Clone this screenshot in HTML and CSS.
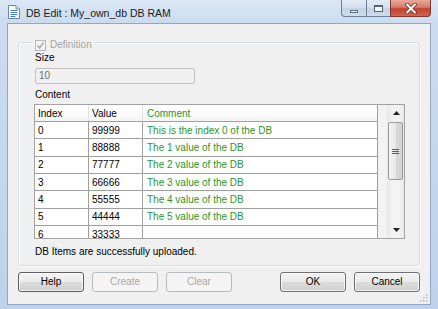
FILE: index.html
```html
<!DOCTYPE html>
<html>
<head>
<meta charset="utf-8">
<link rel="stylesheet" href="styles.css">
</head>
<body>
<div class="window">
  <div class="titlebar">
    <svg class="app-icon" width="12" height="14" viewBox="0 0 12 14">
      <path d="M0.5 0.5 H8 L11.5 4 V13.5 H0.5 Z" fill="#fff" stroke="#6f87a6"/>
      <path d="M8 0.5 V4 H11.5" fill="#dfe7f1" stroke="#6f87a6"/>
      <path d="M2.5 5.5 H9.5 M2.5 7.5 H9.5 M2.5 9.5 H9.5 M2.5 11.5 H7.5" stroke="#4d7fc4" stroke-width="1"/>
    </svg>
    <span class="title">DB Edit : My_own_db DB RAM</span>
    <div class="caption">
      <div class="cb cb-min"><span class="min-glyph"></span></div>
      <div class="cb cb-max"><span class="max-glyph"></span></div>
      <div class="cb cb-close">
        <svg width="14" height="11" viewBox="0 0 14 11">
          <path d="M3 1.5 L11 9.5 M11 1.5 L3 9.5" stroke="#6b2a22" stroke-width="3.6" stroke-linecap="round"/>
          <path d="M3 1.5 L11 9.5 M11 1.5 L3 9.5" stroke="#ffffff" stroke-width="2" stroke-linecap="round"/>
        </svg>
      </div>
    </div>
  </div>
  <div class="client">
    <fieldset class="group">
      <legend class="legend"><span class="chk"><svg width="9" height="9" viewBox="0 0 9 9"><path d="M1.5 4.5 L3.5 7 L7.5 1.5" fill="none" stroke="#a9a9a9" stroke-width="1.4"/></svg></span><span class="disabled-text">Definition</span></legend>
      <div class="label label-size">Size</div>
      <div class="textbox">10</div>
      <div class="label label-content">Content</div>
      <div class="list">
        <div class="grid">
          <div class="row head">
            <div class="c c1">Index</div>
            <div class="c c2">Value</div>
            <div class="c c3 green">Comment</div>
          </div>
          <div class="row"><div class="c c1">0</div><div class="c c2">99999</div><div class="c c3 green">This is the index 0 of the DB</div></div>
          <div class="row"><div class="c c1">1</div><div class="c c2">88888</div><div class="c c3 green">The 1 value of the DB</div></div>
          <div class="row"><div class="c c1">2</div><div class="c c2">77777</div><div class="c c3 green">The 2 value of the DB</div></div>
          <div class="row"><div class="c c1">3</div><div class="c c2">66666</div><div class="c c3 green">The 3 value of the DB</div></div>
          <div class="row"><div class="c c1">4</div><div class="c c2">55555</div><div class="c c3 green">The 4 value of the DB</div></div>
          <div class="row"><div class="c c1">5</div><div class="c c2">44444</div><div class="c c3 green">The 5 value of the DB</div></div>
          <div class="row"><div class="c c1">6</div><div class="c c2">33333</div><div class="c c3 green"></div></div>
        </div>
        <div class="gap"></div>
        <div class="vscroll">
          <div class="sb-btn"><svg width="7" height="4" viewBox="0 0 7 4"><path d="M0 4 L3.5 0 L7 4 Z" fill="#222"/></svg></div>
          <div class="sb-track">
            <div class="thumb"><span class="grip"></span></div>
          </div>
          <div class="sb-btn"><svg width="7" height="4" viewBox="0 0 7 4"><path d="M0 0 L3.5 4 L7 0 Z" fill="#222"/></svg></div>
        </div>
      </div>
      <div class="status">DB Items are successfully uploaded.</div>
    </fieldset>
    <div class="buttons">
      <div class="btn focus">Help</div>
      <div class="btn disabled">Create</div>
      <div class="btn disabled">Clear</div>
      <div class="spacer"></div>
      <div class="btn">OK</div>
      <div class="btn">Cancel</div>
    </div>
    <svg class="grip-corner" width="8" height="8" viewBox="0 0 8 8">
      <rect x="6" y="0" width="1.5" height="1.5" fill="#b8b8b8"/>
      <rect x="3" y="3" width="1.5" height="1.5" fill="#b8b8b8"/>
      <rect x="6" y="3" width="1.5" height="1.5" fill="#b8b8b8"/>
      <rect x="0" y="6" width="1.5" height="1.5" fill="#b8b8b8"/>
      <rect x="3" y="6" width="1.5" height="1.5" fill="#b8b8b8"/>
      <rect x="6" y="6" width="1.5" height="1.5" fill="#b8b8b8"/>
    </svg>
  </div>
</div>
</body>
</html>
```
FILE: styles.css
```css
* { box-sizing: border-box; }
html, body { margin: 0; padding: 0; }
body {
  font-family: "Liberation Sans", Arial, sans-serif;
  font-size: 10px;
  color: #000;
  background: #c4d6ed;
}
.window {
  width: 438px;
  height: 309px;
  display: flex;
  flex-direction: column;
  background: linear-gradient(#dbe7f5 0px, #cbdcf0 22px, #bed2eb 100%);
  overflow: hidden;
}
.titlebar {
  height: 23px;
  display: flex;
  align-items: center;
  padding-left: 8px;
  flex: none;
}
.app-icon { flex: none; margin-right: 6px; margin-top: 1px; }
.title {
  font-size: 10.5px;
  color: #1b1b1b;
  margin-top: 2px;
}
.caption {
  margin-left: auto;
  margin-right: 7px;
  align-self: flex-start;
  display: flex;
}
.cb {
  height: 17px;
  border: 1px solid #6c7f98;
  border-top: none;
  display: flex;
  align-items: center;
  justify-content: center;
}
.cb-min {
  width: 25px;
  border-right: none;
  border-bottom-left-radius: 4px;
  background: linear-gradient(#e3ebf5, #d2deec 50%, #c3d2e6 51%, #cfdcee);
}
.cb-max {
  width: 24px;
  border-right: none;
  background: linear-gradient(#e3ebf5, #d2deec 50%, #c3d2e6 51%, #cfdcee);
}
.cb-close {
  width: 41px;
  border-color: #7e3a2f;
  border-bottom-right-radius: 4px;
  background: linear-gradient(#e9a99c, #d77a6a 45%, #c2412e 55%, #d2644f);
}
.min-glyph {
  width: 8px;
  height: 3px;
  margin-top: 6px;
  background: #f4f7fb;
  border: 1px solid #5b6d85;
}
.max-glyph {
  width: 9px;
  height: 7px;
  border: 1px solid #4e5f76;
  border-top-width: 2px;
  background: #fbfcfe;
}
.client {
  flex: 1;
  margin: 0 7px 4px 7px;
  border: 1px solid #92a6c1;
  background: #f0f0f0;
  padding: 10px 10px 0 10px;
  display: flex;
  flex-direction: column;
  position: relative;
}
.group {
  margin: 0;
  border: 1px solid #d5dfe5;
  border-radius: 3px;
  box-shadow: inset 1px 1px 0 #fff, 1px 1px 0 #fff;
  padding: 0 14px 7px 15px;
  min-width: 0;
}
.legend {
  display: flex;
  align-items: center;
  padding: 5px 2px 0 0;
  margin-left: -1px;
  line-height: 12px;
}
.chk {
  width: 11px;
  height: 11px;
  margin-left: 2px;
  margin-right: 4px;
  border: 1px solid #b9b9b9;
  background: #f4f4f4;
  display: flex;
  align-items: center;
  justify-content: center;
}
.disabled-text { color: #a3a3a3; }
.label {
  line-height: 12px;
  padding-left: 1px;
}
.label-size { margin-top: 1px; }
.textbox {
  margin-top: 4px;
  margin-left: 1px;
  width: 160px;
  height: 16px;
  border: 1px solid #c2c2c2;
  border-radius: 2px;
  background: #f0f0f0;
  color: #6d6d6d;
  line-height: 14px;
  padding-left: 3px;
}
.label-content { margin-top: 5px; }
.list {
  margin-top: 3px;
  width: 371px;
  height: 135px;
  border: 1px solid #a3a3a3;
  background: #fff;
  display: flex;
  overflow: hidden;
}
.grid {
  width: 343px;
  flex: none;
  height: 100%;
  overflow: hidden;
  background: #fff;
}
.row {
  display: flex;
  height: 17.33px;
  border-bottom: 1px solid #a0a0a0;
  flex: none;
}
.row.head {
  height: 17px;
  background: linear-gradient(#ffffff, #fbfbfb 60%, #f3f3f3);
}
.c {
  border-right: 1px solid #a0a0a0;
  padding-left: 3px;
  display: flex;
  align-items: center;
  white-space: nowrap;
  overflow: hidden;
}
.head .c { border-right-color: #e2e2e2; }
.head .c3 { border-right-color: #a0a0a0; }
.c1 { width: 54px; }
.c2 { width: 54px; }
.c3 { width: 235px; padding-left: 4px; }
.green { color: #2a962a; }
.gap {
  width: 9px;
  flex: none;
  background: #f2f2f2;
}
.vscroll {
  width: 17px;
  flex: none;
  display: flex;
  flex-direction: column;
  background: linear-gradient(to right, #e6e6e6, #f3f3f3 30%, #f3f3f3 70%, #e9e9e9);
}
.sb-btn {
  height: 16px;
  flex: none;
  display: flex;
  align-items: center;
  justify-content: center;
  padding-left: 1px;
}
.sb-track {
  flex: 1;
  padding: 1px 1px 0 1px;
}
.thumb {
  height: 58px;
  border: 1px solid #9a9a9a;
  border-radius: 2px;
  background: linear-gradient(to right, #f3f3f3, #e9e9e9 50%, #d9d9d9 51%, #d4d4d4);
  display: flex;
  align-items: center;
  justify-content: center;
}
.grip {
  width: 7px;
  height: 5px;
  border-top: 1px solid #5c5c5c;
  border-bottom: 1px solid #5c5c5c;
  background: linear-gradient(transparent 1px, #5c5c5c 1px, #5c5c5c 2px, transparent 2px);
}
.status {
  margin-top: 7px;
  line-height: 12px;
  padding-left: 1px;
}
.buttons {
  margin-top: 6px;
  display: flex;
  gap: 8px;
}
.spacer { flex: 1; }
.btn {
  width: 66px;
  height: 20px;
  border: 1px solid #707070;
  border-radius: 3px;
  background: linear-gradient(#f2f2f2, #ebebeb 48%, #dddddd 52%, #cfcfcf);
  box-shadow: inset 0 0 0 1px rgba(255,255,255,0.7);
  display: flex;
  align-items: center;
  justify-content: center;
  line-height: 12px;
}
.btn.focus { border-color: #5f5f5f; }
.btn.disabled {
  border-color: #b8bcbf;
  background: #f4f4f4;
  box-shadow: none;
  color: #a8a8a8;
}
.grip-corner {
  position: absolute;
  right: 2px;
  bottom: 2px;
}
```
